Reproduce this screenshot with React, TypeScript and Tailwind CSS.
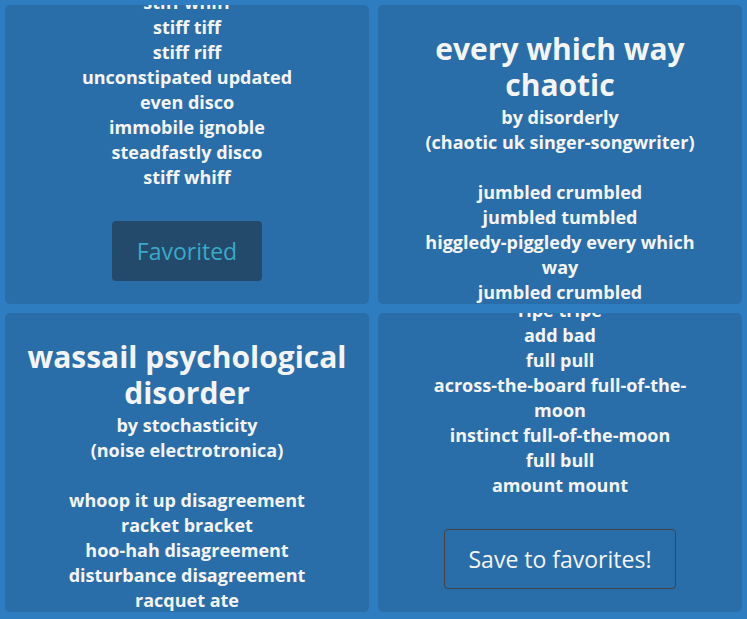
import React from "react";

const font = { fontFamily: "'Open Sans', Lato, sans-serif" };

function Lines({ items }: { items: string[] }) {
  return (
    <div className="flex flex-col items-center">
      {items.map((t, i) =>
        t === "" ? (
          <div key={i} className="h-[25px]" />
        ) : (
          <div key={i} className="whitespace-nowrap text-[18px] leading-[25px] font-bold">
            {t}
          </div>
        )
      )}
    </div>
  );
}

function Title({ lines }: { lines: string[] }) {
  return (
    <h2 className="flex flex-col items-center pt-[26px]">
      {lines.map((l, i) => (
        <span key={i} className="whitespace-nowrap text-[30px] leading-[36px] font-bold">
          {l}
        </span>
      ))}
    </h2>
  );
}

export default function App() {
  return (
    <div
      style={font}
      className="w-[747px] h-[619px] bg-[#2f7dc1] p-[5px] grid grid-cols-2 grid-rows-[299px_299px] gap-[9px] text-[#f4f4f4]"
    >
      {/* card 1 */}
      <div className="bg-[#2a6ea9] rounded-[5px] overflow-hidden flex flex-col items-center text-center">
        <div className="-mt-[15px]">
          <Lines
            items={[
              "stiff whiff",
              "stiff tiff",
              "stiff riff",
              "unconstipated updated",
              "even disco",
              "immobile ignoble",
              "steadfastly disco",
              "stiff whiff",
            ]}
          />
        </div>
        <button className="mt-[31px] w-[150px] h-[60px] shrink-0 bg-[#234a6a] rounded-[4px] text-[23px] text-[#3aa9c9]">
          Favorited
        </button>
      </div>

      {/* card 2 */}
      <div className="bg-[#2a6ea9] rounded-[5px] overflow-hidden flex flex-col items-center text-center">
        <Title lines={["every which way", "chaotic"]} />
        <div className="mt-[2px]">
          <Lines
            items={[
              "by disorderly",
              "(chaotic uk singer-songwriter)",
              "",
              "jumbled crumbled",
              "jumbled tumbled",
              "higgledy-piggledy every which",
              "way",
              "jumbled crumbled",
            ]}
          />
        </div>
      </div>

      {/* card 3 */}
      <div className="bg-[#2a6ea9] rounded-[5px] overflow-hidden flex flex-col items-center text-center">
        <Title lines={["wassail psychological", "disorder"]} />
        <div className="mt-[2px]">
          <Lines
            items={[
              "by stochasticity",
              "(noise electrotronica)",
              "",
              "whoop it up disagreement",
              "racket bracket",
              "hoo-hah disagreement",
              "disturbance disagreement",
              "racquet ate",
            ]}
          />
        </div>
      </div>

      {/* card 4 */}
      <div className="bg-[#2a6ea9] rounded-[5px] overflow-hidden flex flex-col items-center text-center">
        <div className="-mt-[15px]">
          <Lines
            items={[
              "ripe tripe",
              "add bad",
              "full pull",
              "across-the-board full-of-the-",
              "moon",
              "instinct full-of-the-moon",
              "full bull",
              "amount mount",
            ]}
          />
        </div>
        <button className="mt-[31px] w-[232px] h-[60px] shrink-0 border border-[#444444] rounded-[4px] text-[23px] text-[#f4f4f4]">
          Save to favorites!
        </button>
      </div>
    </div>
  );
}
